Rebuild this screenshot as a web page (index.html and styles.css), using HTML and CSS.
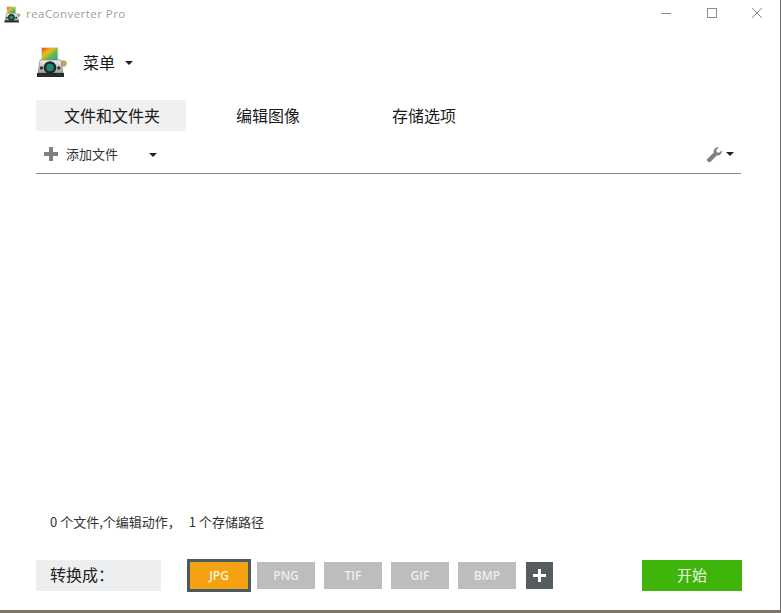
FILE: index.html
```html
<!DOCTYPE html>
<html lang="zh-CN">
<head>
<meta charset="utf-8">
<title>reaConverter Pro</title>
<link rel="stylesheet" href="styles.css">
</head>
<body>
<div class="window">
  <header class="titlebar">
    <svg class="app-icon-small" viewBox="0 0 32 32"><use href="#logo"/></svg>
    <span class="app-title">reaConverter Pro</span>
    <div class="win-controls">
      <svg class="win-btn" viewBox="0 0 10 10"><path d="M0 5.5H10" /></svg>
      <svg class="win-btn" viewBox="0 0 10 10"><rect x=".5" y=".5" width="9" height="9"/></svg>
      <svg class="win-btn" viewBox="0 0 10 10"><path d="M0 0L10 10M10 0L0 10"/></svg>
    </div>
  </header>

  <div class="menu-row">
    <svg class="app-icon" viewBox="0 0 32 32">
      <defs>
        <linearGradient id="photo" x1="0" y1="0" x2="1" y2="1">
          <stop offset="0" stop-color="#e0401f"/>
          <stop offset=".35" stop-color="#f5b818"/>
          <stop offset=".6" stop-color="#63c040"/>
          <stop offset="1" stop-color="#2f86e0"/>
        </linearGradient>
        <linearGradient id="body" x1="0" y1="0" x2="0" y2="1">
          <stop offset="0" stop-color="#f4f4ee"/>
          <stop offset="1" stop-color="#9a9c96"/>
        </linearGradient>
        <symbol id="logo" viewBox="0 0 32 32">
          <path d="M5.5 1.5H22V15H5.5Z" fill="url(#photo)" stroke="#dcdcdc" stroke-width="1"/>
          <circle cx="27.5" cy="17.5" r="3.2" fill="#c8a060"/>
          <path d="M4 14H25L27 27H2Z" fill="url(#body)" stroke="#777" stroke-width=".6"/>
          <path d="M1 27H28V31H1Z" fill="#2a2a2a"/>
          <circle cx="14" cy="21.5" r="6.3" fill="#1c2a2a"/>
          <circle cx="14" cy="21.5" r="3.8" fill="#1f8a72"/>
          <circle cx="5.5" cy="22" r="1.7" fill="#333"/>
          <circle cx="22.8" cy="22" r="1.7" fill="#333"/>
        </symbol>
      </defs>
      <use href="#logo"/>
    </svg>
    <span class="menu-label">菜单</span>
    <span class="caret menu-caret"></span>
  </div>

  <nav class="tabs">
    <div class="tab tab-active">文件和文件夹</div>
    <div class="tab tab-edit">编辑图像</div>
    <div class="tab tab-save">存储选项</div>
  </nav>

  <div class="toolbar">
    <svg class="plus-icon" viewBox="0 0 14 14"><path d="M5 0H9V5H14V9H9V14H5V9H0V5H5Z"/></svg>
    <span class="add-label">添加文件</span>
    <span class="caret add-caret"></span>
    <svg class="wrench" viewBox="0 0 16 16"><path d="M15.8 3.6A4.6 4.6 0 0 1 10.4 9L4.2 15.4A2.3 2.3 0 0 1 .7 12.2L7.2 5.8A4.6 4.6 0 0 1 12.6.3L9.9 3.2L10.4 5.7L12.8 6.2Z"/></svg>
    <span class="caret tool-caret"></span>
  </div>

  <main class="file-area"></main>

  <div class="status"><span>0 个文件,个编辑动作，</span><span class="status-gap">1 个存储路径</span></div>

  <footer class="bottom">
    <div class="convert-label">转换成：</div>
    <div class="formats">
      <button class="fmt fmt-active">JPG</button>
      <button class="fmt">PNG</button>
      <button class="fmt">TIF</button>
      <button class="fmt">GIF</button>
      <button class="fmt">BMP</button>
      <button class="fmt-add"><svg viewBox="0 0 13 13"><path d="M5 0H8V5H13V8H8V13H5V8H0V5H5Z"/></svg></button>
    </div>
    <button class="start">开始</button>
  </footer>
</div>
</body>
</html>
```
FILE: styles.css
```css
* { box-sizing: border-box; }
html, body { margin: 0; padding: 0; height: 100%; overflow: hidden; background: #fff; }
body { font-family: "Noto Sans CJK SC", "Liberation Sans", sans-serif; color: #222; }

.window {
  width: 781px;
  height: 613px;
  display: flex;
  flex-direction: column;
  border-right: 1px solid #6e6e6e;
  border-bottom: 3px solid #7b7661;
  background: #fff;
}

.titlebar { height: 30px; display: flex; align-items: center; padding: 0 0 2px 4px; flex: none; }
.app-icon-small { width: 17px; height: 17px; flex: none; }
.app-title { margin-left: 5px; font: 11.5px/16px "Open Sans", sans-serif; color: #a0a0a0; letter-spacing: .45px; }
.win-controls { margin-left: auto; display: flex; gap: 35.5px; padding-right: 18px; padding-bottom: 2px; }
.win-btn { width: 10px; height: 10px; fill: none; stroke: #8c8c8c; stroke-width: 1; overflow: visible; }

.menu-row { height: 50px; margin-top: 7px; padding-left: 36px; display: flex; align-items: center; flex: none; }
.app-icon { width: 32px; height: 32px; flex: none; }
.menu-label { margin-left: 15px; margin-top: -1px; font-size: 16px; line-height: 24px; color: #1a1a1a; }

.caret { width: 0; height: 0; border-left: 4px solid transparent; border-right: 4px solid transparent; border-top: 4px solid #222; flex: none; }
.menu-caret { margin-left: 10px; margin-top: 2px; }

.tabs { margin-top: 13px; padding-left: 36px; display: flex; height: 31px; flex: none; }
.tab { font-size: 16px; line-height: 30px; color: #1a1a1a; white-space: nowrap; }
.tab-active { width: 150px; text-align: center; padding-left: 2px; background: #eff0f1; }
.tab-edit { margin-left: 50px; width: 64px; }
.tab-save { margin-left: 92px; width: 64px; }

.toolbar { margin: 0 39px 0 36px; height: 43px; padding: 4px 7px 0 8px; display: flex; align-items: center; border-bottom: 1px solid #8a8a8a; flex: none; }
.plus-icon { width: 14px; height: 14px; fill: #808080; flex: none; }
.add-label { margin-left: 8px; font-size: 13px; line-height: 18px; color: #333; }
.add-caret { margin-left: 31px; margin-top: 2px; }
.wrench { width: 15px; height: 15px; margin-left: auto; fill: #808080; flex: none; }
.tool-caret { margin-left: 4px; }

.file-area { flex: 1; }

.status { height: 18px; padding-left: 50px; font-size: 13px; line-height: 17px; color: #333; white-space: nowrap; flex: none; }
.status-gap { margin-left: 8px; }

.bottom { margin-top: 28px; height: 33px; margin-bottom: 18px; padding-left: 36px; display: flex; align-items: center; flex: none; }
.convert-label { width: 125px; height: 31px; padding-left: 14px; font-size: 16px; line-height: 28px; color: #222; background: #eceef0; }

.formats { margin-left: 26px; display: flex; align-items: center; }
.fmt { width: 58px; height: 27px; margin-left: 9px; padding: 0; border: 0; background: #bdbdbd; color: #eee; font: 600 12px/27px "Open Sans", sans-serif; }
.fmt:nth-child(2) { margin-left: 6px; }
.fmt-active { width: 64px; height: 33px; margin-left: 0; border: 3px solid #4a5a60; background: #f5a212; color: #fdf3dc; }
.fmt-add { width: 27px; height: 27px; margin-left: 10px; padding: 7px; border: 0; background: #555c60; display: flex; }
.fmt-add svg { width: 13px; height: 13px; fill: #fff; }

.start { margin-left: 89px; width: 100px; height: 31px; padding: 0 0 2px; border: 0; background: #3fb50c; color: #eaf7e0; font: 15px/29px "Noto Sans CJK SC", sans-serif; }
```
